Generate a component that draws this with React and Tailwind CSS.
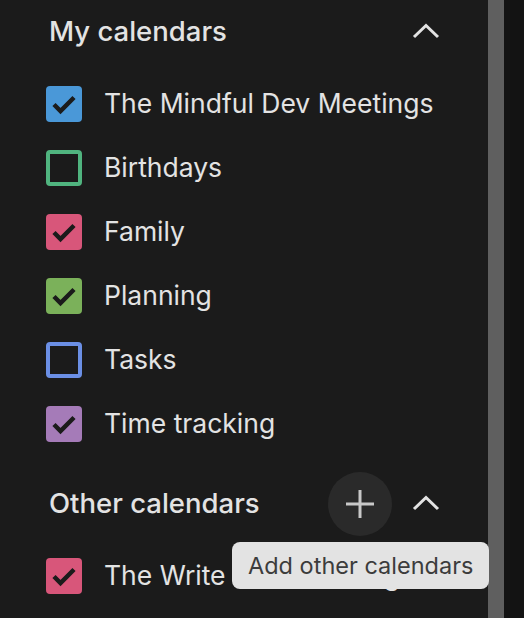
const MY_CALENDARS = [
  { name: 'The Mindful Dev Meetings', color: '#4a98d8', checked: true },
  { name: 'Birthdays', color: '#50b47f', checked: false },
  { name: 'Family', color: '#d8567a', checked: true },
  { name: 'Planning', color: '#7bb15a', checked: true },
  { name: 'Tasks', color: '#6b8fe5', checked: false },
  { name: 'Time tracking', color: '#a57bb8', checked: true },
];

const OTHER_CALENDARS = [
  { name: 'The Write Club Meetings', color: '#d8567a', checked: true },
];

function Checkbox({ color, checked }) {
  return (
    <div
      className="w-9 h-9 rounded-[4px] flex items-center justify-center shrink-0"
      style={checked ? { background: color } : { border: `4px solid ${color}` }}
    >
      {checked && (
        <svg width="36" height="36" viewBox="0 0 36 36">
          <polyline
            points="8,18.5 14.5,25 28,11.5"
            fill="none"
            stroke="#1b1b1b"
            strokeWidth="4.5"
          />
        </svg>
      )}
    </div>
  );
}

function ChevronUp() {
  return (
    <div className="w-12 h-12 flex items-center justify-center">
      <svg width="28" height="20" viewBox="0 0 28 20">
        <polyline points="2,15 14,3.5 26,15" fill="none" stroke="#e3e3e3" strokeWidth="3" />
      </svg>
    </div>
  );
}

function Row({ name, color, checked }) {
  return (
    <div className="h-16 flex items-center gap-[22px]">
      <Checkbox color={color} checked={checked} />
      <span className="text-[26.5px] text-[#e3e3e3] whitespace-nowrap">{name}</span>
    </div>
  );
}

export default function App() {
  return (
    <div
      className="relative w-[524px] h-[618px] bg-[#1b1b1b] flex overflow-hidden"
      style={{ fontFamily: 'Inter, "Noto Sans", sans-serif' }}
    >
      <div className="flex-1 pl-[46px] pr-[38px]">
        {/* My calendars */}
        <div className="h-16 flex items-center">
          <span className="flex-1 pl-[3px] text-[27.5px] font-medium text-[#e3e3e3]">My calendars</span>
          <ChevronUp />
        </div>
        <div className="mt-2">
          {MY_CALENDARS.map((c) => (
            <Row key={c.name} {...c} />
          ))}
        </div>

        {/* Other calendars */}
        <div className="mt-4 h-16 flex items-center">
          <span className="flex-1 pl-[3px] text-[27.5px] font-medium text-[#e3e3e3]">Other calendars</span>
          <div className="w-16 h-16 rounded-full bg-[#2a2a2a] flex items-center justify-center mr-[10px]">
            <svg width="30" height="30" viewBox="0 0 30 30">
              <path d="M15 1v28M1 15h28" stroke="#c8c8c8" strokeWidth="3" />
            </svg>
          </div>
          <ChevronUp />
        </div>
        <div className="mt-2">
          {OTHER_CALENDARS.map((c) => (
            <Row key={c.name} {...c} />
          ))}
        </div>
      </div>

      {/* Scrollbar */}
      <div className="w-4 bg-[#5f5f5f]" />
      <div className="w-5 bg-[#131313]" />

      {/* Tooltip */}
      <div className="absolute left-[232px] top-[542px] w-[257px] h-[47px] rounded-lg bg-[#e3e3e3] flex items-center pl-4 text-[23.5px] text-[#3c3c3c] whitespace-nowrap">
        Add other calendars
      </div>
    </div>
  );
}
